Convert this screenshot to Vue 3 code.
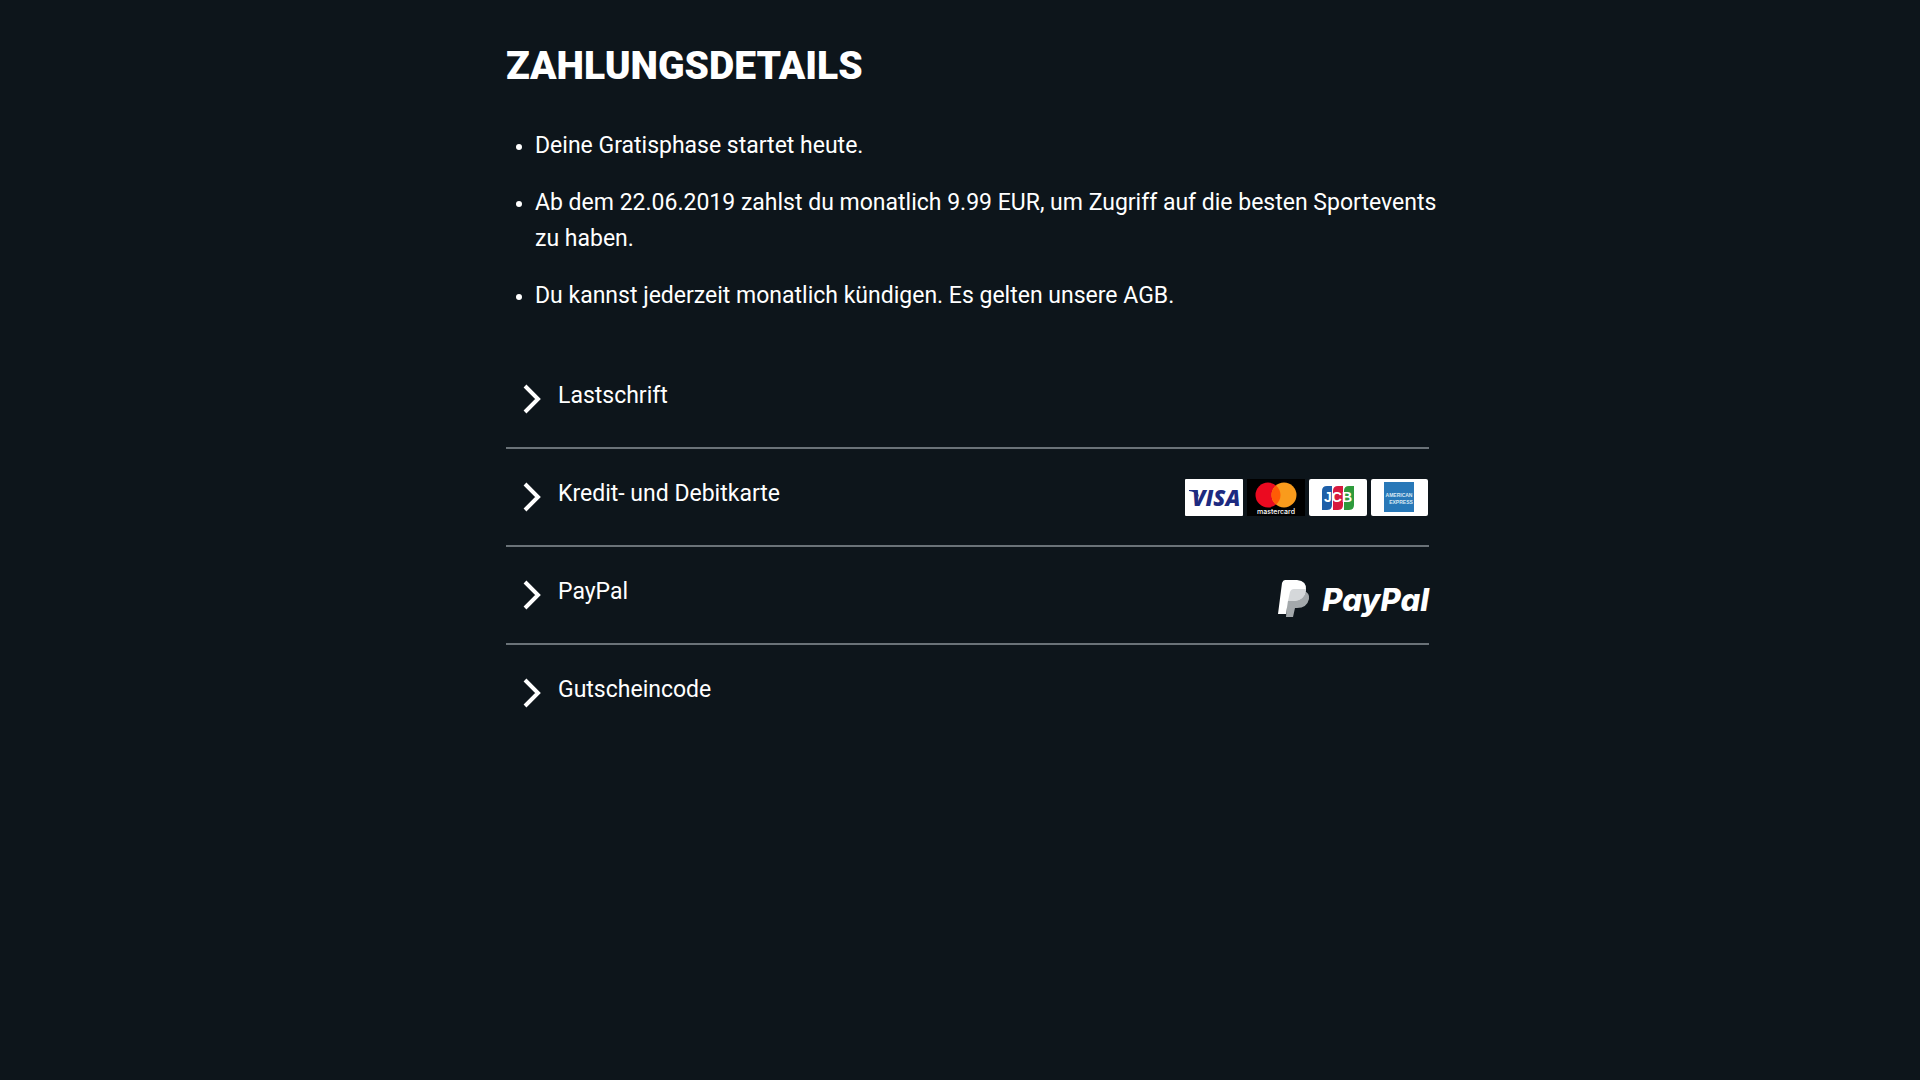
<script setup>
const notes = [
  'Deine Gratisphase startet heute.',
  'Ab dem 22.06.2019 zahlst du monatlich 9.99 EUR, um Zugriff auf die besten Sportevents zu haben.',
  'Du kannst jederzeit monatlich kündigen. Es gelten unsere AGB.',
]

const methods = [
  { id: 'debit', label: 'Lastschrift' },
  { id: 'card', label: 'Kredit- und Debitkarte' },
  { id: 'paypal', label: 'PayPal' },
  { id: 'voucher', label: 'Gutscheincode' },
]
</script>

<template>
  <main class="page">
    <h1 class="title">ZAHLUNGSDETAILS</h1>

    <ul class="notes">
      <li v-for="note in notes" :key="note" class="note">{{ note }}</li>
    </ul>

    <ul class="methods">
      <li v-for="method in methods" :key="method.id" class="method">
        <button type="button" class="toggle" aria-expanded="false">
          <svg class="chevron" viewBox="0 0 18 30" aria-hidden="true">
            <path d="M2 2 L15 15 L2 28" fill="none" stroke="#fff" stroke-width="4" />
          </svg>
          <span class="label">{{ method.label }}</span>

          <span v-if="method.id === 'card'" class="cards">
            <svg class="card" viewBox="0 0 58 37" role="img" aria-label="Visa">
              <rect width="58" height="37" rx="1" fill="#fff" />
              <text x="7" y="27" class="visa-text">VISA</text>
              <path d="M4 11 H12 L14 18 C11 14 8 12 4 12 Z" fill="#1d2a80" />
            </svg>
            <svg class="card" viewBox="0 0 58 37" role="img" aria-label="Mastercard">
              <rect width="58" height="37" fill="#000" />
              <circle cx="21" cy="16" r="12.5" fill="#eb0a20" />
              <circle cx="37" cy="16" r="12.5" fill="#f99b1c" />
              <path d="M29 6.4 A12.5 12.5 0 0 1 29 25.6 A12.5 12.5 0 0 1 29 6.4 Z" fill="#ff5b05" />
              <text x="29" y="35" class="mastercard-text">mastercard</text>
            </svg>
            <svg class="card" viewBox="0 0 58 37" role="img" aria-label="JCB">
              <rect width="58" height="37" rx="2" fill="#fff" />
              <path d="M18 7 H23 V26 Q23 31 18 31 H13 V12 Q13 7 18 7 Z" fill="#1d5fa8" />
              <path d="M29 7 H34 V26 Q34 31 29 31 H24 V12 Q24 7 29 7 Z" fill="#d7193f" />
              <path d="M40 7 H45 V26 Q45 31 40 31 H35 V12 Q35 7 40 7 Z" fill="#2e9a3c" />
              <text x="29" y="23" class="jcb-text">JCB</text>
            </svg>
            <svg class="card" viewBox="0 0 58 37" role="img" aria-label="American Express">
              <rect width="57" height="37" rx="2" fill="#fff" />
              <rect x="13" y="3" width="30" height="30" fill="#2878b8" />
              <text x="28" y="18" class="amex-text">AMERICAN</text>
              <text x="30" y="25" class="amex-text">EXPRESS</text>
            </svg>
          </span>

          <span v-if="method.id === 'paypal'" class="paypal">
            <svg class="paypal-mark" viewBox="0 0 32 37" aria-hidden="true">
              <path d="M10 11 H26 Q32 13 31 19 Q29 28 19 28 H17 L15 37 H8 Z" fill="#a3a8ab" />
              <path d="M7 0 H19 Q29 1 28 10 Q26 21 15 21 H10 L8 34 H0 L4 3 Q5 0 7 0 Z" fill="#fff" />
              <path d="M12 12 Q13 9 16 9 H28 Q27 21 15 21 H10 Z" fill="#d5d8da" />
            </svg>
            <span class="paypal-text">PayPal</span>
          </span>
        </button>
      </li>
    </ul>
  </main>
</template>

<style>
body {
  background: #0d151b;
}
</style>

<style scoped>
.page {
  box-sizing: border-box;
  max-width: 938px;
  margin: 0 auto;
  padding: 41px 0 40px 15px;
  color: #fff;
  font-family: Roboto, "Liberation Sans", sans-serif;
}

.title {
  margin: 0;
  font-size: 39px;
  line-height: 50px;
  font-weight: 900;
}

.notes {
  margin: 37px -20px 0 0;
  padding: 0 0 0 29px;
  font-size: 23px;
  line-height: 36px;
}

.note {
  margin-bottom: 21px;
}

.note::marker {
  font-size: 21px;
}

.methods {
  margin: 37px 0 0;
  padding: 0;
  list-style: none;
}

.method + .method {
  border-top: 2px solid #6a7278;
}

.toggle {
  box-sizing: border-box;
  display: flex;
  align-items: center;
  width: 100%;
  height: 96px;
  padding: 0 0 0 17px;
  border: 0;
  background: none;
  color: inherit;
  font: inherit;
  font-size: 23px;
  line-height: 36px;
  text-align: left;
  cursor: pointer;
}

.chevron {
  width: 18px;
  height: 30px;
}

.label {
  flex: 1;
  padding: 0 0 6px 17px;
}

.cards {
  display: flex;
  gap: 4px;
}

.card {
  width: 58px;
  height: 37px;
}

.visa-text {
  fill: #1d2a80;
  font: italic 900 22px "Open Sans", sans-serif;
}

.mastercard-text {
  fill: #fff;
  font: 500 7px Inter, sans-serif;
  text-anchor: middle;
}

.jcb-text {
  fill: #fff;
  font: 700 14px "Liberation Sans", sans-serif;
  text-anchor: middle;
}

.amex-text {
  fill: #d9e8f3;
  font: 700 5px "Liberation Sans", sans-serif;
  text-anchor: middle;
}

.paypal {
  display: flex;
  align-items: center;
  gap: 12px;
  padding-top: 6px;
}

.paypal-mark {
  width: 32px;
  height: 37px;
}

.paypal-text {
  padding-top: 4px;
  font: italic 800 31px/36px Inter, sans-serif;
}
</style>
